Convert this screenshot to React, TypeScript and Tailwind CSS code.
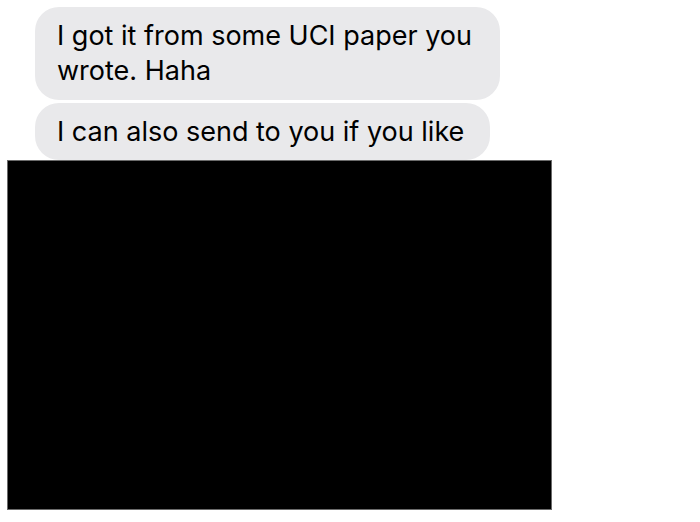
export default function App() {
  return (
    <div className="w-[700px] h-[522px] bg-white overflow-hidden relative" style={{ fontFamily: 'Inter, "Liberation Sans", Arial, sans-serif' }}>
      <div className="flex flex-col items-start pt-[7px]">
        <div className="ml-[35px] w-[465px] h-[93px] rounded-[24px] bg-[#e9e9eb] pl-[22px] pt-[11px] text-[27px] leading-[35px] text-black">
          I got it from some UCI paper you<br />wrote. Haha
        </div>
        <div className="ml-[35px] mt-[3px] w-[455px] h-[57px] rounded-[24px] bg-[#e9e9eb] pl-[22px] pt-[11px] text-[27px] leading-[35px] text-black">
          I can also send to you if you like
        </div>
        <div className="ml-[7px] w-[545px] h-[350px] bg-black border border-[#6b6b6b]" />
      </div>
    </div>
  );
}
